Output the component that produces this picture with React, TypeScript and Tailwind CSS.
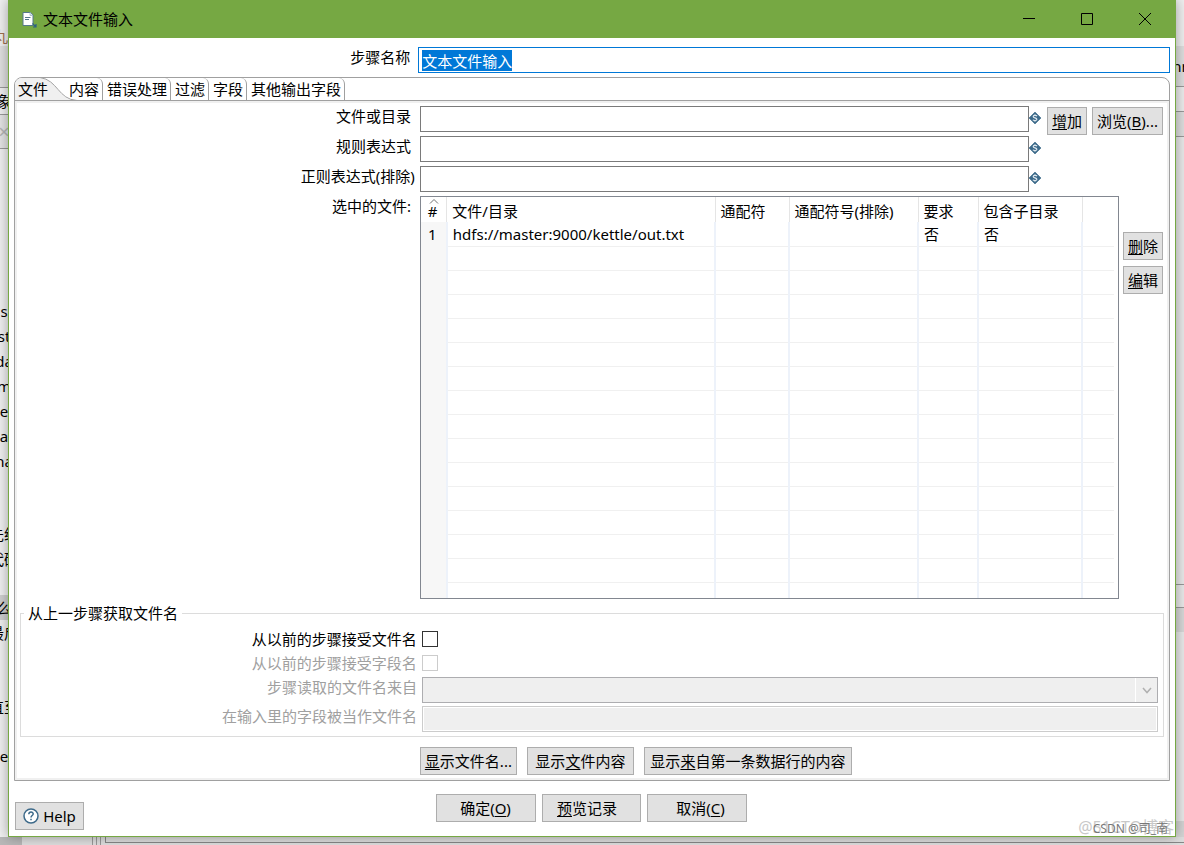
import { useEffect, useRef } from "react";
import type { ReactNode } from "react";
import clsx from "clsx";

const tabs = ["内容", "错误处理", "过滤", "字段", "其他输出字段"];

const pathFields = [
  { id: "path", label: "文件或目录 " },
  { id: "regex", label: "规则表达式 " },
  { id: "exclude", label: "正则表达式(排除)" },
];

const columns = ["文件/目录", "通配符", "通配符号(排除)", "要求", "包含子目录", ""];
const firstRow = ["hdfs://master:9000/kettle/out.txt", "", "", "否", "否", ""];

// text of the editor behind the dialog, one entry per line
const behindLines = [
  "s", "st", "da", "m", "e", "a", "na", "", "", "先经", "代码", "",
  "么", "最后", "", " ", "直至", "", "e",
];

function Button({ className, children }: { className?: string; children: ReactNode }) {
  return (
    <button
      type="button"
      className={clsx(
        "h-7 shrink-0 border border-[#adadad] bg-[#e1e1e1] text-center whitespace-nowrap",
        className
      )}
    >
      {children}
    </button>
  );
}

function Key({ children }: { children: ReactNode }) {
  return <span className="underline decoration-1 underline-offset-2">{children}</span>;
}

function VariableIcon() {
  return (
    <svg width="12" height="12" viewBox="0 0 12 12" className="mt-1.5 shrink-0" aria-hidden>
      <path d="M6 0 12 6 6 12 0 6Z" fill="#3d6a8a" stroke="#3d6a8a" strokeWidth=".6" />
      <path
        d="M8 4.100C7.300 3 4.200 3.100 4.200 4.700 4.200 6.300 7.900 5.600 7.900 7.300 7.800 8.900 4.600 8.900 3.900 7.800M6 2.200v1M6 8.700v1"
        fill="none"
        stroke="#dfe8ee"
        strokeWidth="1.200"
      />
    </svg>
  );
}

function TitleBar() {
  return (
    <header className="flex h-[38px] items-center bg-[#76a843] pr-px pl-3">
      <svg width="17" height="17" viewBox="0 0 17 17" className="mr-[5px]" aria-hidden>
        <path d="M2 1.500h7.500l2.500 2.500v10.500H2Z" fill="#fff" stroke="#55788a" />
        <path d="M9 1.500v3h3" fill="#d5e3ea" stroke="#9db8c4" strokeWidth=".8" />
        <path d="M4 6.500h5.500M4 8.500h4" stroke="#55788a" />
        <path d="M11.500 12.500l3 3M15 13v3h-3" fill="none" stroke="#2d6181" strokeWidth="1.200" />
      </svg>
      <h1 className="flex-1">文本文件输入</h1>
      <button type="button" aria-label="最小化" className="flex w-[58px] justify-center">
        <svg width="12" height="12" viewBox="0 0 12 12" stroke="#000">
          <path d="M0 5.500h12" />
        </svg>
      </button>
      <button type="button" aria-label="最大化" className="flex w-[58px] justify-center">
        <svg width="12" height="12" viewBox="0 0 12 12" fill="none" stroke="#000">
          <path d="M.5.5h11v11H.5Z" />
        </svg>
      </button>
      <button type="button" aria-label="关闭" className="flex w-[58px] justify-center">
        <svg width="12" height="12" viewBox="0 0 12 12" stroke="#000">
          <path d="M0 0l12 12M12 0 0 12" />
        </svg>
      </button>
    </header>
  );
}

function TabBar() {
  return (
    <nav role="tablist" className="relative flex h-[23px] overflow-hidden rounded-t-[7px] border-b border-[#a0a0a0]">
      <svg width="62" height="23" viewBox="0 0 62 23" className="absolute top-0 left-0" aria-hidden>
        <path d="M0 0H25C43 2 43 22.500 61 22.500V23H0Z" fill="#f0f0f0" />
        <path d="M25 -.5C43 2 43 21.500 62 22.500" fill="none" stroke="#a0a0a0" />
      </svg>
      <button type="button" role="tab" aria-selected className="relative w-[50px] pl-[3px] text-left">
        文件
      </button>
      {tabs.map((tab) => (
        <button
          key={tab}
          type="button"
          role="tab"
          aria-selected={false}
          className="relative rounded-tr-md border-r border-[#a0a0a0] pr-[3px] pl-1"
        >
          {tab}
        </button>
      ))}
    </nav>
  );
}

function FileTable() {
  return (
    <div className="h-[403px] flex-1 border border-[#828790] pr-1">
      <table className="w-full table-fixed border-collapse text-left">
        <colgroup>
          <col className="w-[26px]" />
          <col />
          <col className="w-[74px]" />
          <col className="w-[129px]" />
          <col className="w-[60px]" />
          <col className="w-[104px]" />
          <col className="w-8" />
        </colgroup>
        <thead>
          <tr className="h-[25px]">
            <th className="relative border-r border-[#e5e5e5] pt-0.5 pr-0.5 text-center font-normal">
              <svg width="10" height="5" viewBox="0 0 10 5" className="absolute top-0.5 left-2" aria-hidden>
                <path d="M1 4.500 5 .5l4 4" fill="none" stroke="#707070" />
              </svg>
              #
            </th>
            {columns.map((name, i) => (
              <th
                key={i}
                className="border-r border-[#e5e5e5] pt-0.5 pl-[5px] font-normal whitespace-nowrap last:border-r-0"
              >
                {name}
              </th>
            ))}
          </tr>
        </thead>
        <tbody>
          {Array.from({ length: 16 }, (_, row) => (
            <tr key={row} className={row < 15 ? "h-6" : "h-4"}>
              <td className="border-r-2 border-r-[#edf2fa] bg-[#f7f7f7] pr-0.5 text-center">
                {row === 0 && "1"}
              </td>
              {columns.map((_, i) => (
                <td
                  key={i}
                  className={clsx(
                    "border-r-2 border-r-[#edf2fa] pl-[5px] whitespace-nowrap last:border-r-0",
                    row < 15 && "border-b border-b-[#f0f0f0]"
                  )}
                >
                  {row === 0 && firstRow[i]}
                </td>
              ))}
            </tr>
          ))}
        </tbody>
      </table>
    </div>
  );
}

function PreviousStep() {
  return (
    <fieldset className="mx-[5px] mt-1 border border-[#dcdcdc] pb-1">
      <legend className="ml-[3px] px-1">从上一步骤获取文件名</legend>
      <div className="flex h-7 items-center pt-1">
        <label htmlFor="accept" className="mr-[3px] w-[35%] shrink-0 pr-1 text-right">
          从以前的步骤接受文件名
        </label>
        <input id="accept" type="checkbox" className="-ml-0.5 size-4 appearance-none border border-[#333] bg-white" />
      </div>
      <div className="flex h-6 items-center text-[#a0a0a0]">
        <label htmlFor="passField" className="mr-[3px] w-[35%] shrink-0 pr-1 text-right">
          从以前的步骤接受字段名
        </label>
        <input
          id="passField"
          type="checkbox"
          disabled
          className="-ml-0.5 size-4 appearance-none border border-[#ccc] bg-white"
        />
      </div>
      <div className="mt-0.5 flex pr-[5px] text-[#a0a0a0]">
        <label htmlFor="step" className="mr-[3px] w-[35%] shrink-0 pr-0.5 text-right">
          步骤读取的文件名来自
        </label>
        <div className="relative flex-1">
          <select
            id="step"
            disabled
            className="block h-[26px] w-full appearance-none border border-[#adadb0] bg-[#efefef] opacity-100"
          />
          <span className="pointer-events-none absolute inset-y-px right-px flex w-[22px] items-center justify-center border-l border-white">
            <svg width="10" height="7" viewBox="0 0 10 7" fill="none" stroke="#b0b0b0" strokeWidth="1.500">
              <path d="M1 1l4 4.500L9 1" />
            </svg>
          </span>
        </div>
      </div>
      <div className="mt-[3px] flex pr-[5px] text-[#a0a0a0]">
        <label htmlFor="field" className="mr-[3px] w-[35%] shrink-0 pr-0.5 text-right">
          在输入里的字段被当作文件名
        </label>
        <input
          id="field"
          disabled
          className="h-[26px] min-w-0 flex-1 border border-[#ccc] bg-[#efefef] shadow-[inset_0_0_0_1px_#fff]"
        />
      </div>
    </fieldset>
  );
}

function FilePanel() {
  return (
    <div role="tabpanel" className="pt-[5px] pb-[5px] shadow-[inset_0_0_0_2px_#f0f0f0]">
      {pathFields.map(({ id, label }, i) => (
        <div key={id} className="mb-1 flex h-[26px] pr-1.5">
          <label htmlFor={id} className="mr-[3px] w-[35%] shrink-0 pr-0.5 text-right whitespace-pre">
            {label}
          </label>
          <input id={id} className="h-[26px] min-w-0 flex-1 border border-[#7a7a7a] bg-white px-1" />
          <VariableIcon />
          <div className="flex w-[122px] shrink-0 justify-end gap-[5px] pt-px">
            {i === 0 && (
              <>
                <Button className="w-10">
                  <Key>增</Key>加
                </Button>
                <Button className="w-[71px]">
                  浏览(<Key>B</Key>)...
                </Button>
              </>
            )}
          </div>
        </div>
      ))}
      <div className="flex pr-1.5">
        <span className="mr-[3px] w-[35%] shrink-0 pr-0.5 text-right whitespace-pre">选中的文件: </span>
        <FileTable />
        <div className="ml-1 flex flex-col gap-1.5 pt-9">
          <Button className="w-10">
            <Key>删</Key>除
          </Button>
          <Button className="w-10">
            <Key>编</Key>辑
          </Button>
        </div>
      </div>
      <PreviousStep />
      <div className="mt-2.5 ml-[35%] flex gap-2.5 pl-px">
        <Button className="w-[97px]">
          <Key>显</Key>示文件名...
        </Button>
        <Button className="w-[107px]">
          显示<Key>文</Key>件内容
        </Button>
        <Button className="w-52">
          显示<Key>来</Key>自第一条数据行的内容
        </Button>
      </div>
    </div>
  );
}

function Dialog() {
  const nameRef = useRef<HTMLInputElement>(null);

  useEffect(() => {
    nameRef.current?.focus();
    nameRef.current?.select();
  }, []);

  return (
    <main className="z-10 min-w-0 flex-1 border border-t-0 border-[#76a843] bg-white shadow-[0_0_12px_rgba(0,0,0,0.35)]">
      <TitleBar />
      <div className="flex pt-[9px] pr-[5px]">
        <label htmlFor="stepName" className="mr-[3px] w-[35%] shrink-0 pr-[5px] text-right">
          步骤名称
        </label>
        <input
          id="stepName"
          ref={nameRef}
          defaultValue="文本文件输入"
          className="h-[26px] min-w-0 flex-1 border border-[#0078d7] px-[3px] outline-none selection:bg-[#0078d7] selection:text-white"
        />
      </div>
      <div className="mx-[5px] mt-1 rounded-t-lg border border-[#a0a0a0]">
        <TabBar />
        <FilePanel />
      </div>
      <div className="grid grid-cols-[1fr_auto_1fr] pt-[13px] pr-2 pb-1.5 pl-1.5">
        <div className="pt-2">
          <button
            type="button"
            className="flex h-7 w-[69px] items-center justify-center gap-1 border border-[#adadad] bg-[#e1e1e1]"
          >
            <svg width="16" height="16" viewBox="0 0 16 16" fill="none" stroke="#3d6a8a" aria-hidden>
              <circle cx="8" cy="8" r="7" fill="#fff" strokeWidth="1.500" />
              <path d="M5.800 6.300C5.900 3.300 10.300 3.500 10.200 6 10.100 7.500 8 7.600 8 9.400M8 10.700v1.500" strokeWidth="1.500" />
            </svg>
            Help
          </button>
        </div>
        <div className="flex gap-1.5">
          <Button className="w-[100px]">
            确定(<Key>O</Key>)
          </Button>
          <Button className="w-[99px] pr-2">
            <Key>预</Key>览记录
          </Button>
          <Button className="w-[100px] pl-2">
            取消(<Key>C</Key>)
          </Button>
        </div>
      </div>
    </main>
  );
}

function LeftEdge() {
  return (
    <aside className="flex w-2 shrink-0 flex-col overflow-hidden bg-[#f0f0f0]" aria-hidden>
      <div className="flex h-[46px] items-end justify-end text-[#a07050]">丸</div>
      <div className="h-[41px] bg-[#e0e0e0]" />
      <div className="flex h-7 items-center justify-center border-t border-b border-[#999]">象</div>
      <div className="flex h-[34px] items-center justify-center border-b border-[#999] bg-[#e4e4e4] text-xl text-[#b5b5b5]">
        ×
      </div>
      <div className="h-[149px]" />
      {behindLines.map((text, i) => (
        <div
          key={i}
          className={clsx(
            "flex shrink-0 items-center justify-center whitespace-nowrap",
            text ? "h-[25px]" : "h-6",
            text === "么" && "bg-[#cfcfcf]"
          )}
        >
          {text}
        </div>
      ))}
    </aside>
  );
}

function RightEdge() {
  return (
    <aside className="flex w-2 shrink-0 flex-col overflow-hidden bg-[#e9e9e9]" aria-hidden>
      <div className="h-[46px] bg-[#efefef]" />
      <div className="flex h-10 items-center justify-center bg-[#dedede] whitespace-nowrap">nr</div>
      <div className="h-[26px] border-y border-[#999] bg-[#ececec]" />
      <div className="h-[25px] border-b border-[#999] bg-[#dedede]" />
      <div className="h-[447px]" />
      <div className="h-6 border-y border-[#999]" />
      <div className="h-6 bg-[#d8d8d8]" />
      <div className="flex-1" />
      <div className="h-4 bg-[#d4d4d4]" />
    </aside>
  );
}

export default function App() {
  return (
    <div className="relative flex min-h-screen flex-col overflow-hidden bg-[#dedede] font-['Noto_Sans','Noto_Sans_CJK_SC',sans-serif] text-[15px] leading-5 text-black">
      <div className="flex">
        <LeftEdge />
        <Dialog />
        <RightEdge />
      </div>
      <div className="flex h-2 overflow-hidden" aria-hidden>
        <div className="w-[22px] bg-[#b8b8b8]" />
        <div className="w-[71px] border-r border-[#999]" />
        <div className="w-1 border-r border-[#999]" />
        <div className="w-1 border-r border-[#999]" />
        <div className="ml-1 h-1.5 flex-1 border-b border-l border-[#888]" />
      </div>
      <div className="pointer-events-none absolute right-2.5 bottom-2 z-20 text-base leading-5 text-[#c8c8c8]">
        @51CTO博客
      </div>
      <div className="pointer-events-none absolute right-4 bottom-1.5 z-20 text-xs leading-5 text-[#777]">
        CSDN @司_南
      </div>
    </div>
  );
}
